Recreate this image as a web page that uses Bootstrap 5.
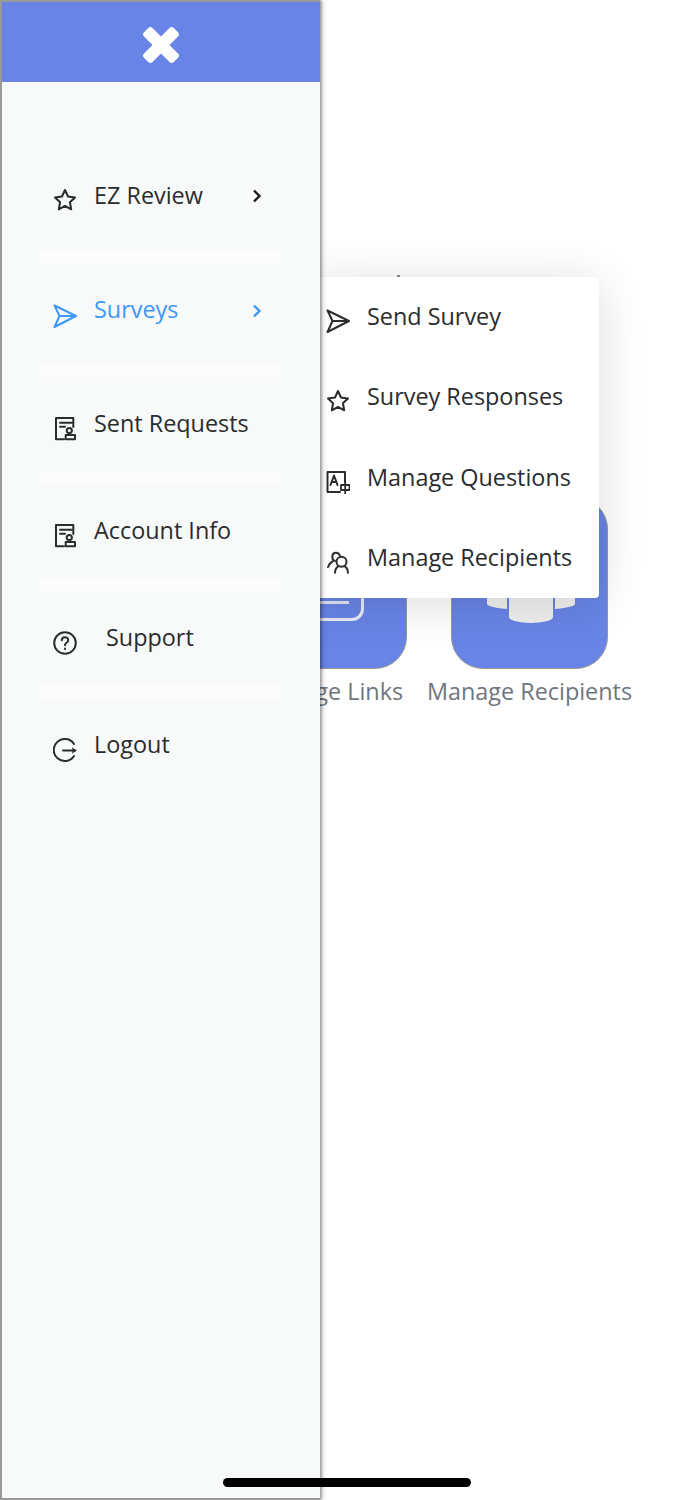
<!DOCTYPE html>
<html lang="en">
<head>
<meta charset="utf-8">
<title>Menu</title>
<link rel="stylesheet" href="https://cdn.jsdelivr.net/npm/bootstrap@5.3.0/dist/css/bootstrap.min.css">
<style>
html,body{height:1500px;margin:0;background:#fff;overflow:hidden}
body{font-family:"Open Sans",sans-serif;color:#2a2c2e;position:relative;width:693px}
.tile-area{padding:497px 0 0 230px;gap:4px}
.tile-item{width:197px}
.tile-box{width:157px;height:172px;background:#6884e6;border:1px solid #9a9a8e;border-radius:32px;position:relative;overflow:hidden}
.tile-cap{font-size:23.4px;line-height:32px;color:#6f7680;margin-top:6px;white-space:nowrap}
.links-shape{position:absolute;left:34px;top:55px;width:79px;height:68px;border:3px solid #e9ecf6;border-radius:12px}
.links-bar{position:absolute;left:34px;top:103px;width:64px;height:3px;background:#dfe3f0}
.ppl-side{position:absolute;width:88px;height:29px;left:35px;top:83px;background:#f0f0f0;border-radius:0 0 44px 44px/0 0 6px 6px}
.ppl-mid{position:absolute;width:48px;height:44px;left:55px;top:83px;background:#f0f0f0;border-radius:0 0 24px 24px/0 0 8px 8px;border:2px solid #6884e6;border-top:0}
.speck{position:absolute;left:397px;top:275px;width:3px;height:2px;background:#8a8a8a}
.side-drawer{position:absolute;left:0;top:0;width:320px;height:1500px;background:#f8faf9;border:2px solid #9a9a9a;border-right:0;z-index:3;box-shadow:2px 0 2px rgba(0,0,0,.28),3px 0 6px rgba(0,0,0,.14)}
.drawer-head{height:80px;background:#6884e6;padding-top:5px}
.drawer-list{padding-top:66px}
.menu-row{height:102px;padding:30px 57px 0 51px;font-size:23.4px;line-height:32px}
.menu-row.first-row{padding-top:31px}
.menu-row.short-row{height:94.5px;padding-top:30px}
.row-rule{height:12.5px;margin:0 40px 0 38px;background:#fbfcfb}
.row-label{margin-left:17px}
.label-shift{margin-left:29px}
.active-row{color:#3f97f7}
.chev{position:relative;margin-left:auto;flex:none;top:1px}
.active-row .chev{top:2px}
.ico{width:24px;height:24px;flex:none;position:relative;top:10px;stroke:currentColor;fill:none;stroke-width:2;stroke-linejoin:round;stroke-linecap:round}
.active-row .ico{top:11px}
.first-row .ico{top:9px}
.sub-menu{position:absolute;left:312px;top:277px;width:287px;height:321px;background:#fff;border-radius:0 4px 4px 0;z-index:2;box-shadow:0 6px 50px rgba(0,0,0,.14)}
.sub-item{height:80.25px;padding:23px 0 0 14px;font-size:23.4px;line-height:32px}
.sub-item .ico{top:9px}
.sub-item span{margin-left:17px;white-space:nowrap}
.home-bar{position:absolute;left:223px;top:1478px;width:248px;height:9px;background:#000;border-radius:5px;z-index:5}
</style>
</head>
<body>
<main class="tile-area d-flex">
  <div class="tile-item d-flex flex-column align-items-center">
    <div class="tile-box"><div class="links-shape"></div><div class="links-bar"></div></div>
    <div class="tile-cap">Manage Links</div>
  </div>
  <div class="tile-item d-flex flex-column align-items-center">
    <div class="tile-box"><div class="ppl-side"></div><div class="ppl-mid"></div></div>
    <div class="tile-cap">Manage Recipients</div>
  </div>
</main>
<div class="speck"></div>

<aside class="side-drawer">
  <div class="drawer-head d-flex align-items-center justify-content-center">
    <svg width="40" height="40" viewBox="0 0 40 40"><g fill="#fff"><rect x="-1" y="14" width="42" height="12" rx="3" transform="rotate(45 20 20)"/><rect x="-1" y="14" width="42" height="12" rx="3" transform="rotate(-45 20 20)"/></g></svg>
  </div>
  <nav class="drawer-list">
    <div class="menu-row first-row"><div class="d-flex">
      <svg class="ico" viewBox="0 0 24 24"><path d="M12 2l3 6.500 7 1-5.100 4.800 1.300 7-6.200-3.400-6.200 3.400 1.300-7L2 9.500l7-1z"/></svg>
      <span class="row-label">EZ Review</span>
      <svg class="chev" width="12" height="32" viewBox="0 0 12 32"><path d="M3 10.500l5.500 5.500-5.500 5.500" fill="none" stroke="#1d1d1d" stroke-width="2.400"/></svg>
    </div></div>
    <div class="row-rule"></div>
    <div class="menu-row active-row"><div class="d-flex">
      <svg class="ico" viewBox="0 0 24 24"><path d="M1.500 1.500L23 12 1.500 23 6.500 12zM6.500 12H23"/></svg>
      <span class="row-label">Surveys</span>
      <svg class="chev" width="12" height="32" viewBox="0 0 12 32"><path d="M3 10.500l5.500 5.500-5.500 5.500" fill="none" stroke="#3f97f7" stroke-width="2.400"/></svg>
    </div></div>
    <div class="row-rule"></div>
    <div class="menu-row short-row"><div class="d-flex">
      <svg class="ico" viewBox="0 0 24 24"><path d="M11 22.300H3V1h17.300v9M7 5.700h11.500M7 9.700h5"/><circle cx="16.300" cy="13.500" r="2.600"/><path d="M16.300 16.100V18M12.700 18h9.300v4.300h-9.300z"/></svg>
      <span class="row-label">Sent Requests</span>
    </div></div>
    <div class="row-rule"></div>
    <div class="menu-row short-row"><div class="d-flex">
      <svg class="ico" viewBox="0 0 24 24"><path d="M11 22.300H3V1h17.300v9M7 5.700h11.500M7 9.700h5"/><circle cx="16.300" cy="13.500" r="2.600"/><path d="M16.300 16.100V18M12.700 18h9.300v4.300h-9.300z"/></svg>
      <span class="row-label">Account Info</span>
    </div></div>
    <div class="row-rule"></div>
    <div class="menu-row short-row"><div class="d-flex">
      <svg class="ico" viewBox="0 0 24 24"><circle cx="12" cy="12" r="10.800"/><path d="M8.800 9.300c.2-4.200 6.500-4 6.400-.1 0 2.700-3.200 2.500-3.200 5"/><path d="M12 17.500v.4"/></svg>
      <span class="label-shift">Support</span>
    </div></div>
    <div class="row-rule"></div>
    <div class="menu-row short-row"><div class="d-flex">
      <svg class="ico" viewBox="0 0 24 24"><path d="M21 6A11 11 0 1 0 21 18M10 12.500h12.500"/><path d="M19.500 10l3 2.500-3 2.500" fill="#222" stroke-width="1"/></svg>
      <span class="row-label">Logout</span>
    </div></div>
  </nav>
</aside>

<div class="sub-menu">
  <div class="sub-item d-flex">
    <svg class="ico" viewBox="0 0 24 24"><path d="M1.500 1.500L23 12 1.500 23 6.500 12zM6.500 12H23"/></svg>
    <span>Send Survey</span>
  </div>
  <div class="sub-item d-flex">
    <svg class="ico" viewBox="0 0 24 24"><path d="M12 2l3 6.500 7 1-5.100 4.800 1.300 7-6.200-3.400-6.200 3.400 1.300-7L2 9.500l7-1z"/></svg>
    <span>Survey Responses</span>
  </div>
  <div class="sub-item d-flex">
    <svg class="ico" viewBox="0 0 24 24"><path d="M19 12V2H1.500v20H14M4.500 15L8 5.500l3.500 9.500M5.800 12h4.400"/><path d="M15 15h8.500v5H15zM19.200 12v11.500" stroke-width="1.800"/></svg>
    <span>Manage Questions</span>
  </div>
  <div class="sub-item d-flex">
    <svg class="ico" viewBox="0 0 24 24"><circle cx="15.500" cy="11.700" r="5"/><path d="M9 22.700c.2-3.300 2-5.700 3.500-6.500M22 22.700c-.2-3.300-2-5.700-3.500-6.500M9 11C5 9.500 5.500 2.700 10 2.700c2 0 3.300 1 3.800 2.800M6.500 11.500C4.500 12.500 3 14.500 2 17"/></svg>
    <span>Manage Recipients</span>
  </div>
</div>

<div class="home-bar"></div>
</body>
</html>
